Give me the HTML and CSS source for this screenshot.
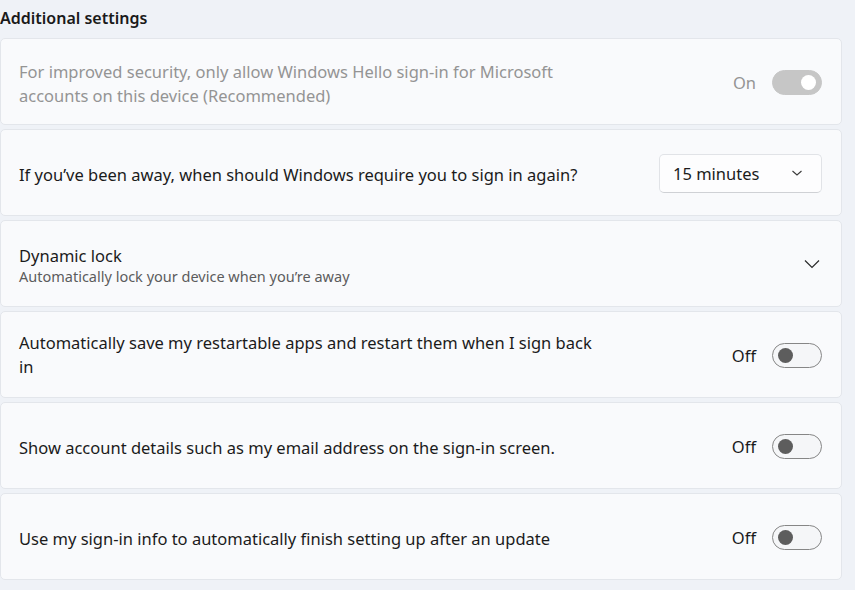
FILE: index.html
```html
<!DOCTYPE html>
<html lang="en">
<head>
<meta charset="utf-8">
<link rel="stylesheet" href="styles.css">
</head>
<body>
<div class="page">
  <h2 class="section-title">Additional settings</h2>
  <div class="list">
    <div class="card disabled">
      <div class="text">
        <div class="label">For improved security, only allow Windows Hello sign-in for Microsoft accounts on this device (Recommended)</div>
      </div>
      <div class="control">
        <span class="state">On</span>
        <span class="toggle on"><span class="knob"></span></span>
      </div>
    </div>
    <div class="card">
      <div class="text">
        <div class="label">If you’ve been away, when should Windows require you to sign in again?</div>
      </div>
      <div class="control">
        <div class="dropdown">
          <span>15 minutes</span>
          <svg class="chev-small" width="12" height="8" viewBox="0 0 12 8"><path d="M1.5 2 L6 6 L10.5 2" fill="none" stroke="#3a3a3a" stroke-width="1.1"/></svg>
        </div>
      </div>
    </div>
    <div class="card">
      <div class="text two-line">
        <div class="label title">Dynamic lock</div>
        <div class="sub">Automatically lock your device when you’re away</div>
      </div>
      <div class="control">
        <svg class="chev" width="16" height="10" viewBox="0 0 16 10"><path d="M1 1.5 L8 8.5 L15 1.5" fill="none" stroke="#2a2a2a" stroke-width="1.2"/></svg>
      </div>
    </div>
    <div class="card">
      <div class="text two-line">
        <div class="label wrap">Automatically save my restartable apps and restart them when I sign back in</div>
      </div>
      <div class="control">
        <span class="state">Off</span>
        <span class="toggle"><span class="knob"></span></span>
      </div>
    </div>
    <div class="card">
      <div class="text">
        <div class="label">Show account details such as my email address on the sign-in screen.</div>
      </div>
      <div class="control">
        <span class="state">Off</span>
        <span class="toggle"><span class="knob"></span></span>
      </div>
    </div>
    <div class="card">
      <div class="text">
        <div class="label">Use my sign-in info to automatically finish setting up after an update</div>
      </div>
      <div class="control">
        <span class="state">Off</span>
        <span class="toggle"><span class="knob"></span></span>
      </div>
    </div>
  </div>
</div>
</body>
</html>
```

FILE: styles.css
```css
html, body {
  margin: 0;
  padding: 0;
  background: #eff2f7;
}
body {
  font-family: "Noto Sans", "Open Sans", sans-serif;
  color: #1b1b1b;
  width: 855px;
  height: 590px;
  overflow: hidden;
}
.page {
  padding-right: 13px;
}
.section-title {
  margin: 0;
  height: 38px;
  line-height: 36px;
  font-size: 16px;
  font-weight: 600;
  color: #1a1a1a;
}
.list {
  display: flex;
  flex-direction: column;
  gap: 4px;
}
.card {
  box-sizing: border-box;
  height: 87px;
  display: flex;
  align-items: center;
  justify-content: space-between;
  padding: 0 19px 0 18px;
  background: #f9fafc;
  border: 1px solid #e3e6eb;
  border-radius: 5px;
}
.text {
  flex: 1;
  padding-top: 4px;
}
.text.two-line {
  padding-top: 0;
}
.label {
  font-size: 16.5px;
  line-height: 24px;
  max-width: 600px;
}
.label.title {
  line-height: 22px;
  padding-top: 2px;
}
.label.wrap {
  max-width: 582px;
}
.sub {
  font-size: 14.5px;
  line-height: 18px;
  color: #5c5c5c;
}
.disabled .label {
  color: #949494;
  max-width: 560px;
}
.control {
  display: flex;
  align-items: center;
  gap: 16px;
  padding-top: 1px;
}
.state {
  font-size: 16.5px;
  color: #1b1b1b;
}
.disabled .state {
  color: #949494;
}
.toggle {
  box-sizing: border-box;
  width: 50px;
  height: 25px;
  border-radius: 13px;
  border: 1px solid #868686;
  background: #f5f6f8;
  display: flex;
  align-items: center;
  padding: 0 5px;
}
.toggle .knob {
  width: 15px;
  height: 15px;
  border-radius: 50%;
  background: #5d5d5d;
}
.toggle.on {
  background: #c6c6c6;
  border-color: #c6c6c6;
  justify-content: flex-end;
}
.toggle.on .knob {
  background: #ffffff;
}
.dropdown {
  box-sizing: border-box;
  width: 163px;
  height: 39px;
  border: 1px solid #e1e3e7;
  border-bottom-color: #cfd1d5;
  border-radius: 5px;
  background: #fdfdfe;
  display: flex;
  align-items: center;
  justify-content: space-between;
  padding: 0 18px 0 13px;
  font-size: 16.5px;
}
.chev {
  margin-right: 2px;
}
```
